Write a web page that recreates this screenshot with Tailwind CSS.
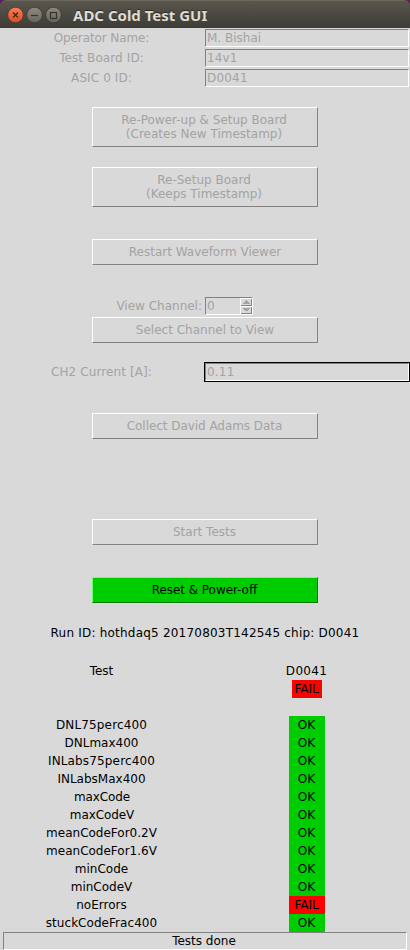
<!DOCTYPE html>
<html lang="en">
<head>
<meta charset="utf-8">
<title>ADC Cold Test GUI</title>
<script src="https://cdn.jsdelivr.net/npm/@tailwindcss/browser@4"></script>
</head>
<body class="bg-[#d9d9d9]">
<div class="w-[410px] h-[950px] flex flex-col overflow-hidden bg-[#d9d9d9] font-['DejaVu_Sans',sans-serif] text-[12px] leading-[14px] text-black whitespace-nowrap">
  <header class="h-7 shrink-0 bg-[#5a1f4e]">
    <div class="h-7 flex items-center rounded-t-[6px] border-t border-[#69665c] bg-linear-to-b from-[#59564d] to-[#3d3c37] pl-[7px]">
      <svg class="shrink-0" width="56" height="18" viewBox="0 0 56 18" fill="none">
        <defs>
          <linearGradient id="close" x1="0" y1="0" x2="0" y2="1"><stop offset="0" stop-color="#f58059"/><stop offset="1" stop-color="#de4c1b"/></linearGradient>
          <linearGradient id="plain" x1="0" y1="0" x2="0" y2="1"><stop offset="0" stop-color="#8d8a81"/><stop offset="1" stop-color="#66645c"/></linearGradient>
        </defs>
        <circle cx="8.5" cy="9" r="7.8" fill="url(#close)" stroke="#35342f" stroke-width=".7"/>
        <path d="M6 6.5l5 5M11 6.5l-5 5" stroke="#48251a" stroke-width="1.4"/>
        <circle cx="27.5" cy="9" r="7.8" fill="url(#plain)" stroke="#35342f" stroke-width=".7"/>
        <path d="M24 9.5h7" stroke="#34332e" stroke-width="1.2"/>
        <circle cx="46.5" cy="9" r="7.8" fill="url(#plain)" stroke="#35342f" stroke-width=".7"/>
        <rect x="43.5" y="6.5" width="6" height="6" stroke="#34332e" stroke-width="1.2"/>
      </svg>
      <h1 class="ml-[10px] font-['Noto_Sans',sans-serif] text-[15px] leading-[20px] font-bold text-[#dfdbd2] [text-shadow:0_-1px_0_#2c2b27]">ADC Cold Test GUI</h1>
    </div>
  </header>

  <section class="text-[#a3a3a3]">
    <div class="h-5 flex items-center"><div class="w-[203px] text-center tracking-[-0.1px]">Operator Name:</div><div class="ml-[2px] w-[204px] h-[18px] border border-t-[#828282] border-l-[#828282] border-r-white border-b-white pl-px pt-px">M. Bishai</div></div>
    <div class="h-5 flex items-center"><div class="w-[203px] text-center tracking-[0.1px]">Test Board ID:</div><div class="ml-[2px] w-[204px] h-[18px] border border-t-[#828282] border-l-[#828282] border-r-white border-b-white pl-px pt-px tracking-[0.1px]">14v1</div></div>
    <div class="h-5 flex items-center"><div class="w-[203px] text-center tracking-[0.1px]">ASIC 0 ID:</div><div class="ml-[2px] w-[204px] h-[18px] border border-t-[#828282] border-l-[#828282] border-r-white border-b-white pl-px pt-px tracking-[0.2px]">D0041</div></div>
  </section>

  <main class="flex flex-col items-center text-[#a3a3a3]">
    <button class="mt-[19px] w-[226px] h-10 pr-[2px] border border-t-white border-l-white border-r-[#828282] border-b-[#828282]">Re-Power-up &amp; Setup Board<br>(Creates New Timestamp)</button>
    <button class="mt-5 w-[226px] h-10 pr-[2px] border border-t-white border-l-white border-r-[#828282] border-b-[#828282]">Re-Setup Board<br>(Keeps Timestamp)</button>
    <button class="mt-8 w-[226px] h-[26px] border border-t-white border-l-white border-r-[#828282] border-b-[#828282]">Restart Waveform Viewer</button>
    <div class="mt-8 w-full h-[18px] flex items-center">
      <div class="w-[203px] pr-px text-right">View Channel:</div>
      <div class="ml-[2px] w-12 h-[18px] flex justify-between border border-t-[#828282] border-l-[#828282] border-r-white border-b-white pl-px">
        <span class="pt-px">0</span>
        <svg width="12" height="16" viewBox="0 0 12 16" shape-rendering="crispEdges">
          <path d="M0 0h12v1H1v7H0z M0 8h12v1H1v7H0z" fill="#fff"/>
          <path d="M11 1h1v7H1V7h10z M11 9h1v7H1v-1h10z" fill="#828282"/>
          <path d="M6 2h1v1h1v1h1v1h1v1H3V5h1V4h1V3h1z M3 10h7v1H9v1H8v1H5v-1H4v-1H3z" fill="#a3a3a3"/>
        </svg>
      </div>
    </div>
    <button class="mt-[2px] w-[226px] h-[26px] border border-t-white border-l-white border-r-[#828282] border-b-[#828282]">Select Channel to View</button>
    <div class="mt-[19px] w-full h-5 flex items-center">
      <div class="w-[203px] text-center tracking-[0.1px]">CH2 Current [A]:</div>
      <div class="ml-px w-[206px] h-5 border border-black"><div class="h-[18px] border border-t-[#828282] border-l-[#828282] border-r-white border-b-white pl-px pt-px tracking-[0.2px]">0.11</div></div>
    </div>
    <button class="mt-[31px] w-[226px] h-[26px] pr-px tracking-[-0.05px] border border-t-white border-l-white border-r-[#828282] border-b-[#828282]">Collect David Adams Data</button>
    <button class="mt-20 w-[226px] h-[26px] pr-px border border-t-white border-l-white border-r-[#828282] border-b-[#828282]">Start Tests</button>
    <button class="mt-8 w-[226px] h-[26px] pr-px tracking-[-0.05px] bg-[#00cd00] text-black border border-t-[#70ff70] border-l-[#70ff70] border-r-[#007b00] border-b-[#007b00]">Reset &amp; Power-off</button>
  </main>

  <p class="mt-[21px] h-[18px] leading-[18px] text-center tracking-[0.21px]">Run ID: hothdaq5 20170803T142545 chip: D0041</p>

  <section class="mt-5 grid grid-cols-[203px_207px] auto-rows-[18px] leading-[18px] text-center">
    <div>Test</div><div class="tracking-[0.3px]">D0041</div>
    <div></div><div class="justify-self-center w-[30px] bg-[#ff0000]">FAIL</div>
    <div class="col-span-2"></div>
    <div class="tracking-[0.15px]">DNL75perc400</div><div class="justify-self-center w-9 bg-[#00cd00]">OK</div>
    <div>DNLmax400</div><div class="justify-self-center w-9 bg-[#00cd00]">OK</div>
    <div class="tracking-[0.15px]">INLabs75perc400</div><div class="justify-self-center w-9 bg-[#00cd00]">OK</div>
    <div>INLabsMax400</div><div class="justify-self-center w-9 bg-[#00cd00]">OK</div>
    <div class="pl-px tracking-[-0.1px]">maxCode</div><div class="justify-self-center w-9 bg-[#00cd00]">OK</div>
    <div class="pl-px tracking-[-0.1px]">maxCodeV</div><div class="justify-self-center w-9 bg-[#00cd00]">OK</div>
    <div>meanCodeFor0.2V</div><div class="justify-self-center w-9 bg-[#00cd00]">OK</div>
    <div>meanCodeFor1.6V</div><div class="justify-self-center w-9 bg-[#00cd00]">OK</div>
    <div>minCode</div><div class="justify-self-center w-9 bg-[#00cd00]">OK</div>
    <div>minCodeV</div><div class="justify-self-center w-9 bg-[#00cd00]">OK</div>
    <div>noErrors</div><div class="justify-self-center w-9 bg-[#ff0000]">FAIL</div>
    <div class="tracking-[0.05px]">stuckCodeFrac400</div><div class="justify-self-center w-9 bg-[#00cd00]">OK</div>
  </section>
  <footer class="mx-[3px] h-[18px] shrink-0 pr-[2px] border border-t-[#828282] border-l-[#828282] border-r-white border-b-white text-center leading-[16px]">Tests done</footer>
</div>
</body>
</html>
